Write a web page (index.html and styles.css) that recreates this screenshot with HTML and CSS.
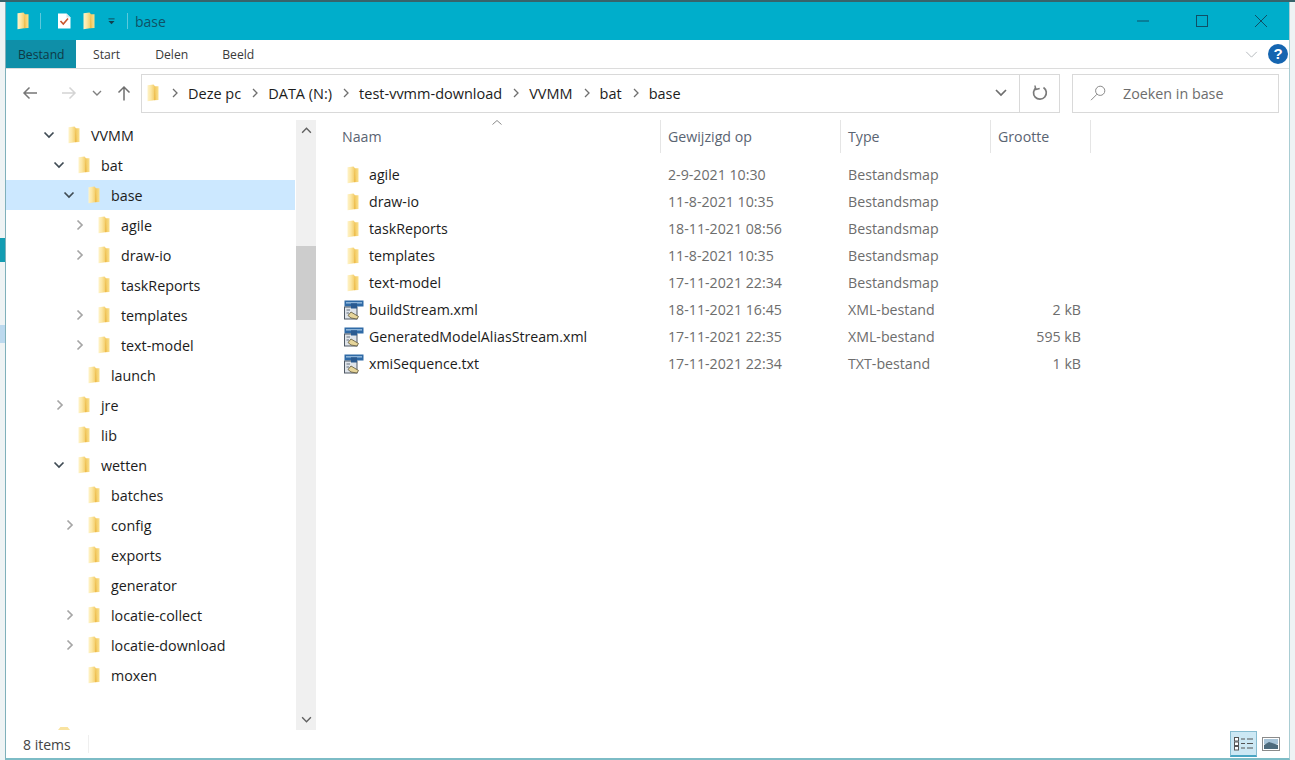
FILE: index.html
```html
<!DOCTYPE html>
<html lang="nl">
<head>
<meta charset="utf-8">
<title>base</title>
<link rel="stylesheet" href="styles.css">
</head>
<body>
<svg class="defs" width="0" height="0" aria-hidden="true">
  <defs>
    <linearGradient id="fg" x1="0" y1="0" x2="1" y2="0">
      <stop offset="0" stop-color="#fff3c8"/>
      <stop offset="0.3" stop-color="#fce7a4"/>
      <stop offset="0.68" stop-color="#f2ca62"/>
      <stop offset="1" stop-color="#fae08e"/>
    </linearGradient>
    <symbol id="folder" viewBox="0 0 14 18">
      <path d="M1.5 1.2 L7.5 0.6 L9 2.2 L12.5 2.2 L12.5 16 L8 16.2 L1.5 17.2 Z" fill="url(#fg)"/>
      <path d="M8.6 2.4 L9.6 15.8 L8 16.2 Z" fill="#eebd4e"/>
    </symbol>
    <symbol id="chev-d" viewBox="0 0 12 12"><path d="M1.5 3.5 L6 8 L10.5 3.5" fill="none" stroke="currentColor" stroke-width="1.7"/></symbol>
    <symbol id="chev-r" viewBox="0 0 12 12"><path d="M4.5 1.5 L9 6 L4.5 10.5" fill="none" stroke="currentColor" stroke-width="1.7"/></symbol>
    <symbol id="crumb" viewBox="0 0 8 10"><path d="M2 1 L6 5 L2 9" fill="none" stroke="currentColor" stroke-width="1.3"/></symbol>
    <symbol id="appfile" viewBox="0 0 20 20">
      <rect x="0.5" y="0.5" width="19" height="6" fill="#2f6aa6"/>
      <rect x="2" y="2" width="16" height="1.6" fill="#8db4d8"/>
      <rect x="7" y="3.5" width="6" height="10" fill="#2a5a90"/>
      <rect x="0.5" y="7" width="12.5" height="12" fill="#dfe4ea" stroke="#4e5864" stroke-width="1"/>
      <rect x="7" y="3.5" width="6" height="5" fill="#2a5a90"/>
      <path d="M2.5 10 H6 M2.5 13 H5" stroke="#67717c" stroke-width="1.2"/>
      <path d="M4 15.5 L7 12 L14.5 16.5 L13 19 L7 18 Z" fill="#e6d59a" stroke="#5e5638" stroke-width="0.8"/>
    </symbol>
  </defs>
</svg>
<div class="desktop">
  <div class="window">
    <header class="titlebar">
      <svg class="qa-folder"><use href="#folder"/></svg>
      <span class="qa-sep"></span>
      <svg class="qa-check" viewBox="0 0 14 16"><path d="M1 0.5 H9.5 L13.5 4.5 V15.5 H1 Z" fill="#fff"/><path d="M9.5 0.5 V4.5 H13.5" fill="#d9e4e8"/><path d="M3.5 8 L6.3 11 L11 5.5" fill="none" stroke="#c8552e" stroke-width="1.6"/></svg>
      <svg class="qa-folder qa-folder2"><use href="#folder"/></svg>
      <svg class="qa-drop" viewBox="0 0 8 8"><path d="M0.5 1 H7.5" stroke="#12404f" stroke-width="1"/><path d="M0.5 3.5 H7.5 L4 7 Z" fill="#12404f"/></svg>
      <span class="qa-sep qa-sep2"></span>
      <span class="win-title">base</span>
      <div class="win-controls">
        <svg class="ctl" viewBox="0 0 12 12"><path d="M0 6 H12" stroke="#0f4f66" stroke-width="1"/></svg>
        <svg class="ctl" viewBox="0 0 12 12"><rect x="0.5" y="0.5" width="11" height="11" fill="none" stroke="#0f4f66" stroke-width="1"/></svg>
        <svg class="ctl" viewBox="0 0 12 12"><path d="M0 0 L12 12 M12 0 L0 12" stroke="#0f4f66" stroke-width="1"/></svg>
      </div>
    </header>
    <nav class="ribbon">
      <span class="tab tab-active">Bestand</span>
      <span class="tab tab-start">Start</span>
      <span class="tab tab-delen">Delen</span>
      <span class="tab tab-beeld">Beeld</span>
      <svg class="ribbon-chev" viewBox="0 0 14 8"><path d="M1 1 L7 7 L13 1" fill="none" stroke="#b4b8bc" stroke-width="1.1"/></svg>
      <span class="help">?</span>
    </nav>
    <section class="addressrow">
      <svg class="nav nav-back" viewBox="0 0 16 14"><path d="M15 7 H2 M7.5 1.5 L2 7 L7.5 12.5" fill="none" stroke="#777" stroke-width="1.5"/></svg>
      <svg class="nav nav-fwd" viewBox="0 0 16 14"><path d="M1 7 H14 M8.5 1.5 L14 7 L8.5 12.5" fill="none" stroke="#d4d4d4" stroke-width="1.5"/></svg>
      <svg class="nav nav-hist" viewBox="0 0 10 6"><path d="M1 1 L5 5 L9 1" fill="none" stroke="#808080" stroke-width="1.4"/></svg>
      <svg class="nav nav-up" viewBox="0 0 14 16"><path d="M7 15.5 V2 M1.5 7.5 L7 2 L12.5 7.5" fill="none" stroke="#6f6f6f" stroke-width="1.5"/></svg>
      <div class="addressbox">
        <svg class="addr-folder"><use href="#folder"/></svg>
        <svg class="crumb first"><use href="#crumb"/></svg><span class="crumbtext">Deze pc</span>
        <svg class="crumb"><use href="#crumb"/></svg><span class="crumbtext">DATA (N:)</span>
        <svg class="crumb"><use href="#crumb"/></svg><span class="crumbtext">test-vvmm-download</span>
        <svg class="crumb"><use href="#crumb"/></svg><span class="crumbtext">VVMM</span>
        <svg class="crumb"><use href="#crumb"/></svg><span class="crumbtext">bat</span>
        <svg class="crumb"><use href="#crumb"/></svg><span class="crumbtext">base</span>
        <div class="addr-end">
          <svg class="addr-chev" viewBox="0 0 12 8"><path d="M1 1 L6 6 L11 1" fill="none" stroke="#6e6e6e" stroke-width="1.7"/></svg>
        </div>
        <div class="addr-refresh">
          <svg viewBox="0 0 16 16" width="16" height="16"><path d="M4.2 2.6 A6.4 6.4 0 1 0 11.5 2.5" fill="none" stroke="#7a7a7a" stroke-width="1.7"/><path d="M3 0.5 L3.6 4.6 L7.7 3.6" fill="none" stroke="#7a7a7a" stroke-width="1.5"/></svg>
        </div>
      </div>
      <div class="searchbox">
        <svg class="search-icon" viewBox="0 0 16 16"><circle cx="10.2" cy="5.8" r="4.6" fill="none" stroke="#8a8a8a" stroke-width="1"/><path d="M7 9.2 L1 15.2" stroke="#8a8a8a" stroke-width="1"/></svg>
        <span>Zoeken in base</span>
      </div>
    </section>
    <main class="content">
      <aside class="tree">
        <div class="tree-row l0"><svg class="tw dark"><use href="#chev-d"/></svg><svg class="tf"><use href="#folder"/></svg><span>VVMM</span></div>
        <div class="tree-row l1"><svg class="tw dark"><use href="#chev-d"/></svg><svg class="tf"><use href="#folder"/></svg><span>bat</span></div>
        <div class="tree-row l2 selected"><svg class="tw dark"><use href="#chev-d"/></svg><svg class="tf"><use href="#folder"/></svg><span>base</span></div>
        <div class="tree-row l3"><svg class="tw"><use href="#chev-r"/></svg><svg class="tf"><use href="#folder"/></svg><span>agile</span></div>
        <div class="tree-row l3"><svg class="tw"><use href="#chev-r"/></svg><svg class="tf"><use href="#folder"/></svg><span>draw-io</span></div>
        <div class="tree-row l3"><span class="tw"></span><svg class="tf"><use href="#folder"/></svg><span>taskReports</span></div>
        <div class="tree-row l3"><svg class="tw"><use href="#chev-r"/></svg><svg class="tf"><use href="#folder"/></svg><span>templates</span></div>
        <div class="tree-row l3"><svg class="tw"><use href="#chev-r"/></svg><svg class="tf"><use href="#folder"/></svg><span>text-model</span></div>
        <div class="tree-row l2"><span class="tw"></span><svg class="tf"><use href="#folder"/></svg><span>launch</span></div>
        <div class="tree-row l1"><svg class="tw"><use href="#chev-r"/></svg><svg class="tf"><use href="#folder"/></svg><span>jre</span></div>
        <div class="tree-row l1"><span class="tw"></span><svg class="tf"><use href="#folder"/></svg><span>lib</span></div>
        <div class="tree-row l1"><svg class="tw dark"><use href="#chev-d"/></svg><svg class="tf"><use href="#folder"/></svg><span>wetten</span></div>
        <div class="tree-row l2"><span class="tw"></span><svg class="tf"><use href="#folder"/></svg><span>batches</span></div>
        <div class="tree-row l2"><svg class="tw"><use href="#chev-r"/></svg><svg class="tf"><use href="#folder"/></svg><span>config</span></div>
        <div class="tree-row l2"><span class="tw"></span><svg class="tf"><use href="#folder"/></svg><span>exports</span></div>
        <div class="tree-row l2"><span class="tw"></span><svg class="tf"><use href="#folder"/></svg><span>generator</span></div>
        <div class="tree-row l2"><svg class="tw"><use href="#chev-r"/></svg><svg class="tf"><use href="#folder"/></svg><span>locatie-collect</span></div>
        <div class="tree-row l2"><svg class="tw"><use href="#chev-r"/></svg><svg class="tf"><use href="#folder"/></svg><span>locatie-download</span></div>
        <div class="tree-row l2"><span class="tw"></span><svg class="tf"><use href="#folder"/></svg><span>moxen</span></div>
        <div class="tree-peek"></div>
      </aside>
      <div class="scrollbar">
        <svg class="sb-arrow" viewBox="0 0 12 8"><path d="M1 6.5 L6 1.5 L11 6.5" fill="none" stroke="#606060" stroke-width="1.6"/></svg>
        <div class="sb-thumb"></div>
        <svg class="sb-arrow sb-down" viewBox="0 0 12 8"><path d="M1 1.5 L6 6.5 L11 1.5" fill="none" stroke="#606060" stroke-width="1.6"/></svg>
      </div>
      <div class="list">
        <div class="list-head">
          <div class="col-h col-name">Naam<svg class="sort" viewBox="0 0 10 5"><path d="M0.5 4.5 L5 0.5 L9.5 4.5" fill="none" stroke="#8a8a8a" stroke-width="1"/></svg></div>
          <div class="col-h">Gewijzigd op</div>
          <div class="col-h">Type</div>
          <div class="col-h">Grootte</div>
        </div>
        <div class="list-row"><div class="c-name"><svg class="lf"><use href="#folder"/></svg><span>agile</span></div><div class="c-mut">2-9-2021 10:30</div><div class="c-mut">Bestandsmap</div><div class="c-size"></div></div>
        <div class="list-row"><div class="c-name"><svg class="lf"><use href="#folder"/></svg><span>draw-io</span></div><div class="c-mut">11-8-2021 10:35</div><div class="c-mut">Bestandsmap</div><div class="c-size"></div></div>
        <div class="list-row"><div class="c-name"><svg class="lf"><use href="#folder"/></svg><span>taskReports</span></div><div class="c-mut">18-11-2021 08:56</div><div class="c-mut">Bestandsmap</div><div class="c-size"></div></div>
        <div class="list-row"><div class="c-name"><svg class="lf"><use href="#folder"/></svg><span>templates</span></div><div class="c-mut">11-8-2021 10:35</div><div class="c-mut">Bestandsmap</div><div class="c-size"></div></div>
        <div class="list-row"><div class="c-name"><svg class="lf"><use href="#folder"/></svg><span>text-model</span></div><div class="c-mut">17-11-2021 22:34</div><div class="c-mut">Bestandsmap</div><div class="c-size"></div></div>
        <div class="list-row"><div class="c-name"><svg class="ff"><use href="#appfile"/></svg><span>buildStream.xml</span></div><div class="c-mut">18-11-2021 16:45</div><div class="c-mut">XML-bestand</div><div class="c-size">2 kB</div></div>
        <div class="list-row"><div class="c-name"><svg class="ff"><use href="#appfile"/></svg><span>GeneratedModelAliasStream.xml</span></div><div class="c-mut">17-11-2021 22:35</div><div class="c-mut">XML-bestand</div><div class="c-size">595 kB</div></div>
        <div class="list-row"><div class="c-name"><svg class="ff"><use href="#appfile"/></svg><span>xmiSequence.txt</span></div><div class="c-mut">17-11-2021 22:34</div><div class="c-mut">TXT-bestand</div><div class="c-size">1 kB</div></div>
      </div>
    </main>
    <footer class="statusbar">
      <span class="count">8 items</span>
      <span class="status-sep"></span>
      <div class="views">
        <span class="view view-on">
          <svg viewBox="0 0 20 14" width="20" height="14"><rect x="0.5" y="0.5" width="4" height="3.5" fill="#fff" stroke="#555"/><rect x="0.5" y="5" width="4" height="3.5" fill="#fff" stroke="#555"/><rect x="0.5" y="9.5" width="4" height="3.5" fill="#fff" stroke="#555"/><path d="M7 2 H11 M13 2 H19 M7 6.5 H11 M13 6.5 H19 M7 11 H11 M13 11 H19" stroke="#555" stroke-width="1"/></svg>
        </span>
        <span class="view">
          <svg viewBox="0 0 18 14" width="18" height="14"><rect x="0.5" y="0.5" width="17" height="13" fill="#fff" stroke="#8b8b8b"/><rect x="2" y="2" width="14" height="5" fill="#a8c4d8"/><path d="M2 8 L7 5 L16 8 V12 H2 Z" fill="#4d6a7c"/></svg>
        </span>
      </div>
    </footer>
  </div>
</div>
</body>
</html>
```
FILE: styles.css
```css
* { box-sizing: border-box; }
html, body { margin: 0; padding: 0; height: 100%; overflow: hidden; }
body { font-family: "Open Sans", "Noto Sans", "Liberation Sans", sans-serif; font-size: 14.2px; color: #1c1c1c; background: #dfe6e8; }
.defs { position: absolute; }
.desktop {
  width: 1295px; height: 760px; padding: 2px 5px 0 5px;
  background:
    linear-gradient(#37636b, #37636b) top / 100% 2px no-repeat,
    linear-gradient(#139cb2, #139cb2) 0 238px / 5px 24px no-repeat,
    linear-gradient(#bcd9ee, #bcd9ee) 0 325px / 5px 18px no-repeat,
    #eef3f4;
}
.window { display: flex; flex-direction: column; width: 100%; height: 758px; background: #fff; border-bottom: 2px solid #7dbcc6; border-left: 1px solid #7fb0ba; border-right: 1px solid #a9cdd3; }

.titlebar { display: flex; align-items: center; height: 38px; flex: none; background: #00aecb; padding-left: 10px; color: #0f4f66; }
.qa-folder { width: 14px; height: 18px; flex: none; }
.qa-sep { width: 1px; height: 16px; margin-left: 10px; background: #5cc9dc; flex: none; }
.qa-check { width: 14px; height: 16px; margin-left: 16px; flex: none; }
.qa-folder2 { margin-left: 11px; }
.qa-drop { width: 7px; height: 7px; margin-left: 12px; flex: none; }
.qa-sep2 { margin-left: 12px; }
.win-title { margin-left: 7px; font-size: 14px; color: #0f5266; }
.win-controls { margin-left: auto; display: flex; gap: 47px; padding-right: 22px; align-items: center; }
.ctl { width: 12px; height: 12px; flex: none; }

.ribbon { display: flex; align-items: center; height: 29px; flex: none; border-bottom: 1px solid #dcdcdc; font-size: 12.2px; color: #3a3a3a; }
.tab { display: flex; align-items: center; height: 28px; }
.tab-active { width: 70px; padding-left: 12px; background: #0f8fa8; color: #0e3a46; }
.tab-start { margin-left: 17px; }
.tab-delen { margin-left: 35px; }
.tab-beeld { margin-left: 34px; }
.ribbon-chev { width: 13px; height: 7px; margin-left: auto; margin-right: 10px; }
.help { width: 20px; height: 20px; margin-right: 1px; border-radius: 50%; background: #1565b0; color: #fff; font: 700 15px/20px "Liberation Sans", sans-serif; text-align: center; flex: none; }

.addressrow { display: flex; align-items: center; height: 51px; flex: none; padding-bottom: 3px; }
.nav { flex: none; }
.nav-back { width: 16px; height: 14px; margin-left: 16px; }
.nav-fwd { width: 16px; height: 14px; margin-left: 23px; }
.nav-hist { width: 10px; height: 6px; margin-left: 15px; }
.nav-up { width: 14px; height: 16px; margin-left: 15px; }
.addressbox { display: flex; align-items: center; width: 919px; height: 39px; margin-left: 10px; border: 1px solid #d9d9d9; font-size: 14.5px; color: #1c1c1c; }
.addr-folder { width: 14px; height: 18px; margin-left: 4px; flex: none; }
.crumb { width: 8px; height: 10px; margin: 0 9px 0 10px; color: #6f6f6f; flex: none; }
.crumb.first { margin-left: 11px; margin-right: 9px; }
.addr-end { margin-left: auto; display: flex; align-items: center; justify-content: center; width: 37px; height: 100%; }
.addr-chev { width: 12px; height: 8px; }
.addr-refresh { display: flex; align-items: center; justify-content: center; width: 40px; height: 100%; border-left: 1px solid #d9d9d9; }
.searchbox { display: flex; align-items: center; width: 207px; height: 39px; margin-left: 12px; border: 1px solid #d9d9d9; color: #6d6d6d; font-size: 14.3px; }
.search-icon { width: 16px; height: 16px; margin-left: 17px; margin-right: 17px; flex: none; }

.content { display: flex; height: 610px; flex: none; }
.tree { width: 289px; height: 610px; flex: none; overflow: hidden; }
.tree-row { display: flex; align-items: center; height: 30px; color: #1c1c1c; font-size: 14.3px; }
.tree-row.selected { background: #cce8ff; }
.l0 { padding-left: 37px; }
.l1 { padding-left: 47px; }
.l2 { padding-left: 57px; }
.l3 { padding-left: 67px; }
.tw { width: 12px; height: 12px; color: #a6a6a6; flex: none; display: block; }
.tw.dark { color: #404c55; }
.tf { width: 14px; height: 18px; margin-left: 12px; margin-right: 10px; flex: none; }
.tree-peek { width: 12px; height: 3px; margin: 37px 0 0 52px; background: #f9e3a0; clip-path: polygon(20% 0, 80% 0, 100% 100%, 0 100%); }

.scrollbar { position: relative; display: flex; flex-direction: column; align-items: center; width: 20px; height: 610px; margin-left: 1px; background: #f0f0f0; flex: none; }
.sb-arrow { width: 11px; height: 7px; margin-top: 7px; flex: none; }
.sb-thumb { width: 20px; height: 74px; margin-top: 112px; background: #cdcdcd; flex: none; }
.sb-down { margin-top: auto; margin-bottom: 7px; }

.list { flex: 1; min-width: 0; }
.list-head { display: grid; grid-template-columns: 345px 180px 150px 100px; height: 33px; margin-bottom: 8px; }
.col-h { position: relative; display: flex; align-items: center; padding-left: 7px; height: 33px; color: #5a6472; font-size: 14.2px; border-right: 1px solid #e5e5e5; }
.col-h.col-name { padding-left: 26px; }
.sort { position: absolute; left: 176px; top: 0; width: 10px; height: 5px; }
.list-row { display: grid; grid-template-columns: 345px 180px 150px 100px; height: 27px; align-items: center; }
.c-name { display: flex; align-items: center; padding-left: 28px; color: #1c1c1c; }
.lf { width: 14px; height: 18px; margin-left: 2px; margin-right: 9px; flex: none; }
.ff { width: 20px; height: 20px; margin-right: 5px; flex: none; }
.c-mut { padding-left: 7px; color: #6d6d6d; }
.c-size { text-align: right; padding-right: 10px; color: #6d6d6d; }

.statusbar { display: flex; align-items: center; flex: 1; min-height: 0; padding-left: 17px; color: #444; }
.count { width: 65px; font-size: 14px; }
.status-sep { width: 1px; height: 18px; background: #efefef; }
.views { margin-left: auto; display: flex; align-items: center; padding-right: 5px; }
.view { display: flex; align-items: center; justify-content: center; width: 27px; height: 26px; }
.view-on { background: #cce8f4; border: 1px solid #86bcd0; border-bottom: 2px solid #4aa6c4; }
```
